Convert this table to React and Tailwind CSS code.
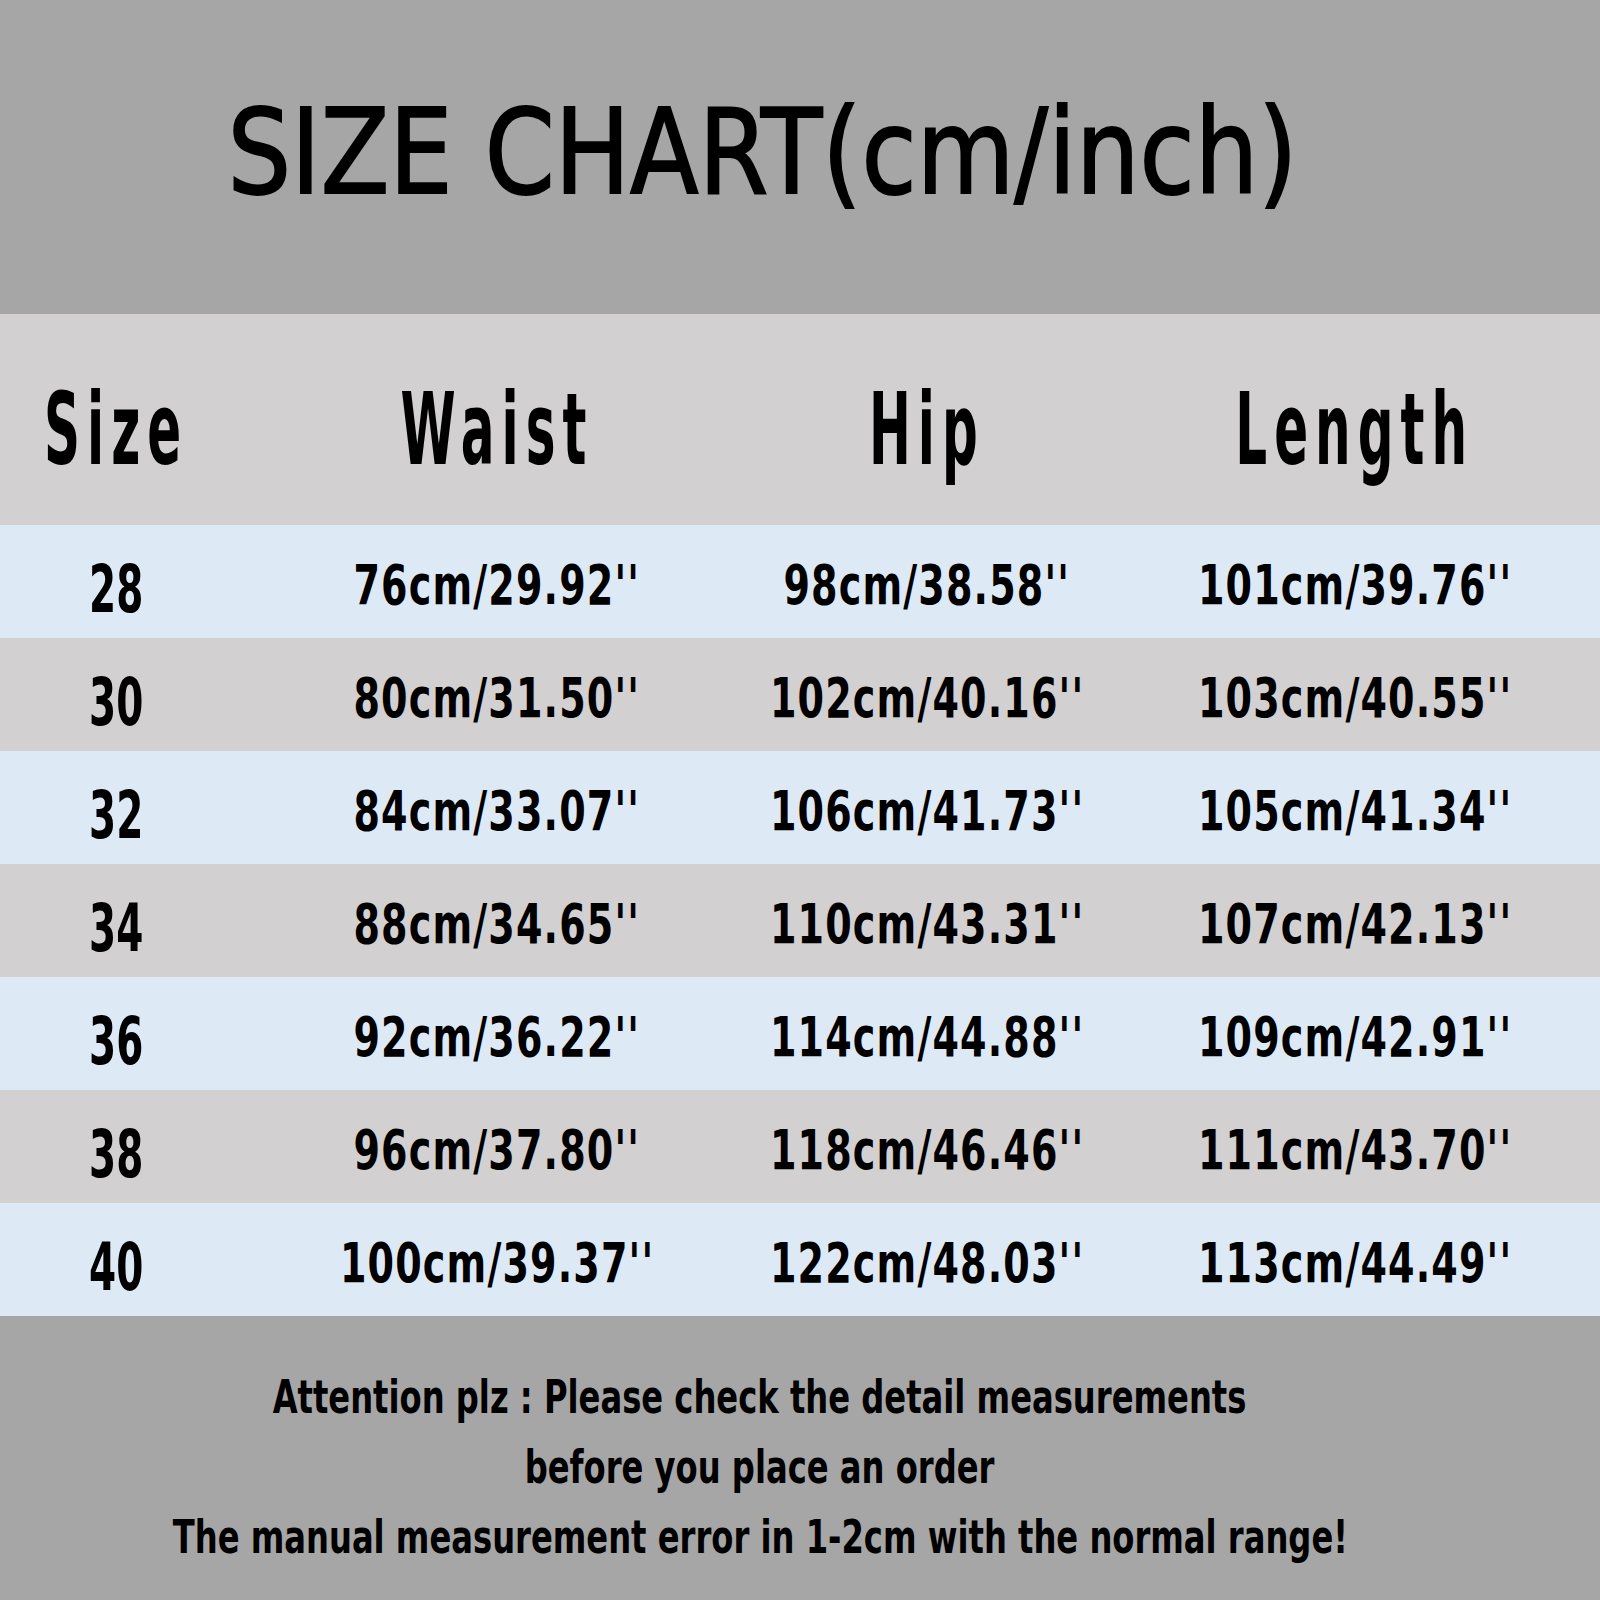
const rows = [
  ['28', "76cm/29.92''", "98cm/38.58''", "101cm/39.76''"],
  ['30', "80cm/31.50''", "102cm/40.16''", "103cm/40.55''"],
  ['32', "84cm/33.07''", "106cm/41.73''", "105cm/41.34''"],
  ['34', "88cm/34.65''", "110cm/43.31''", "107cm/42.13''"],
  ['36', "92cm/36.22''", "114cm/44.88''", "109cm/42.91''"],
  ['38', "96cm/37.80''", "118cm/46.46''", "111cm/43.70''"],
  ['40', "100cm/39.37''", "122cm/48.03''", "113cm/44.49''"],
];

const heads = ['Size', 'Waist', 'Hip', 'Length'];

function Cell({ children, last, className = '' }) {
  return (
    <div className={`flex items-center justify-center ${last ? 'pl-[18px]' : ''} ${className}`}>
      {children}
    </div>
  );
}

export default function App() {
  return (
    <div className="w-[1600px] h-[1600px] overflow-hidden bg-[#a6a6a6] text-black font-['DejaVu_Sans',sans-serif]">
      {/* title band */}
      <div className="h-[314px] flex justify-center pt-[93px] pr-[76px]">
        <span className="inline-block text-[118px] leading-none whitespace-nowrap scale-x-[0.85] [-webkit-text-stroke:2px_black]">
          SIZE CHART(cm/inch)
        </span>
      </div>

      {/* column heads */}
      <div className="h-[211px] bg-[#d2d0d0] grid grid-cols-[232px_530px_330px_1fr] pt-[20px]">
        {heads.map((h, i) => (
          <Cell key={h} last={i === 3}>
            <span className="inline-block text-[100px] leading-none font-bold tracking-[0.14em] whitespace-nowrap scale-x-[0.5]">
              {h}
            </span>
          </Cell>
        ))}
      </div>

      {/* size rows */}
      {rows.map((r, ri) => (
        <div
          key={r[0]}
          className={`h-[113px] grid grid-cols-[232px_530px_330px_1fr] ${ri % 2 === 0 ? 'bg-[#ddeaf6]' : 'bg-[#d2d0d0]'}`}
        >
          <Cell className="pt-[16px]">
            <span className="inline-block text-[65px] leading-none font-bold scale-x-[0.6]">{r[0]}</span>
          </Cell>
          {r.slice(1).map((v, i) => (
            <Cell key={i} last={i === 2} className="pt-[6px]">
              <span className="inline-block text-[56px] leading-none font-bold tracking-[0.03em] whitespace-nowrap scale-x-[0.68]">
                {v}
              </span>
            </Cell>
          ))}
        </div>
      ))}

      {/* note */}
      <div className="pt-[46px] pr-[80px] flex flex-col items-center text-[46px] leading-[70px] font-bold">
        <span className="inline-block whitespace-nowrap scale-x-[0.7]">
          Attention plz : Please check the detail measurements
        </span>
        <span className="inline-block whitespace-nowrap scale-x-[0.7]">before you place an order</span>
        <span className="inline-block whitespace-nowrap scale-x-[0.7]">
          The manual measurement error in 1-2cm with the normal range!
        </span>
      </div>
    </div>
  );
}
